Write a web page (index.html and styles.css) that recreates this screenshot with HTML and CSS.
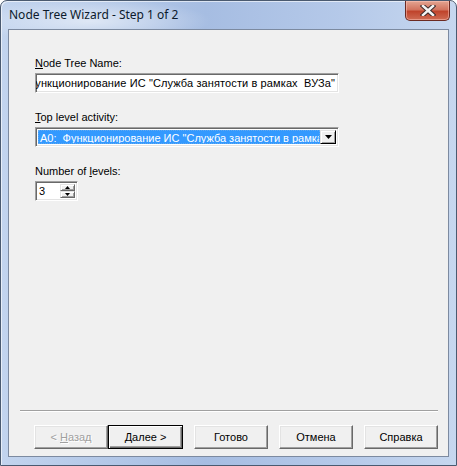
FILE: index.html
```html
<!DOCTYPE html>
<html lang="ru">

<head>
    <meta charset="UTF-8">
    <title>Node Tree Wizard</title>
    <link rel="stylesheet" href="styles.css">
</head>

<body>
    <div class="window">
        <div class="titlebar">
            <span class="title">Node Tree Wizard - Step 1 of 2</span>
            <div class="close">
                <svg width="16" height="11" viewBox="0 0 16 11">
                    <path d="M3 1 L13 10 M13 1 L3 10" stroke="#3a2a2a" stroke-width="4.5" stroke-linecap="square"/>
                    <path d="M3 1 L13 10 M13 1 L3 10" stroke="#f4f4f4" stroke-width="2.5" stroke-linecap="square"/>
                </svg>
            </div>
        </div>
        <div class="client">
            <div class="form">
                <div class="label"><u>N</u>ode Tree Name:</div>
                <div class="edit name-edit">
                    <span class="edit-text">Функционирование ИС "Служба занятости в рамках&nbsp; ВУЗа"</span>
                </div>

                <div class="label gap"><u>T</u>op level activity:</div>
                <div class="combo">
                    <div class="combo-value">A0:&nbsp; Функционирование ИС "Служба занятости в рамках&nbsp; ВУЗа"</div>
                    <div class="combo-btn">
                        <svg width="7" height="4" viewBox="0 0 7 4"><path d="M0 0 H7 L3.5 4 Z" fill="#000"/></svg>
                    </div>
                </div>

                <div class="label gap">Number of <u>l</u>evels:</div>
                <div class="spin">
                    <div class="spin-value">3</div>
                    <div class="spin-btns">
                        <div class="spin-btn">
                            <svg width="5" height="3" viewBox="0 0 5 3"><path d="M2.5 0 L5 3 H0 Z" fill="#000"/></svg>
                        </div>
                        <div class="spin-btn">
                            <svg width="5" height="3" viewBox="0 0 5 3"><path d="M0 0 H5 L2.5 3 Z" fill="#000"/></svg>
                        </div>
                    </div>
                </div>
            </div>

            <div class="footer">
                <div class="separator"></div>
                <div class="buttons">
                    <div class="pair">
                        <button class="btn disabled">&lt; <u>Н</u>азад</button>
                        <button class="btn default"><u>Д</u>алее &gt;</button>
                    </div>
                    <button class="btn">Готово</button>
                    <button class="btn">Отмена</button>
                    <button class="btn">Справка</button>
                </div>
            </div>
        </div>
    </div>
</body>

</html>
```

FILE: styles.css
```css
* {
    margin: 0;
    padding: 0;
    box-sizing: border-box;
}

body {
    width: 457px;
    height: 466px;
    background: #ffffff;
    font-family: "Liberation Sans", Arial, sans-serif;
    font-size: 11px;
    color: #000;
}

.window {
    width: 457px;
    height: 466px;
    display: flex;
    flex-direction: column;
    padding: 0 7px 8px 7px;
    border: 1px solid #4a5a70;
    border-radius: 7px 7px 0 0;
    background:
        radial-gradient(ellipse 120px 22px at 90px 20px, rgba(255, 255, 255, 0.55), rgba(255, 255, 255, 0)),
        linear-gradient(to right, #c2d4ee, #a6bde2 45%, #b5c9e9 75%, #c6d7ef);
    box-shadow: inset 1px 1px 0 rgba(255, 255, 255, 0.6);
}

.titlebar {
    height: 28px;
    display: flex;
    align-items: flex-start;
    justify-content: space-between;
}

.title {
    font-family: "Noto Sans", "Liberation Sans", sans-serif;
    font-size: 12px;
    line-height: 16px;
    margin: 6px 0 0 1px;
    color: #0c1a2c;
}

.close {
    width: 45px;
    height: 20px;
    margin-right: -1px;
    display: flex;
    align-items: center;
    justify-content: center;
    border: 1px solid #6b2a22;
    border-top: none;
    border-radius: 0 0 5px 5px;
    background: linear-gradient(to bottom, #e3a592 0%, #d2745f 45%, #c0442c 55%, #cf6c54 100%);
    box-shadow: inset 0 0 0 1px rgba(255, 200, 190, 0.5);
}

.client {
    flex: 1;
    display: flex;
    flex-direction: column;
    background: #f0f0f0;
    border: 1px solid #7c8aa0;
}

.form {
    flex: 1;
    padding: 26px 0 0 26px;
}

.label {
    line-height: 14px;
    margin-bottom: 3px;
}

.label.gap {
    margin-top: 17px;
}

.label.gap:last-of-type {
    margin-top: 16px;
}

/* sunken 3d edge */
.edit,
.combo,
.spin {
    background: #fff;
    border: 1px solid;
    border-color: #a0a0a0 #fff #fff #a0a0a0;
    box-shadow: inset 1px 1px 0 #696969, inset -1px -1px 0 #e3e3e3;
}

.name-edit {
    width: 304px;
    height: 20px;
    display: flex;
    justify-content: flex-end;
    align-items: center;
    overflow: hidden;
    white-space: nowrap;
    padding: 0 3px 0 2px;
}

.edit-text {
    line-height: 14px;
    letter-spacing: 0.11px;
}

.combo {
    width: 304px;
    height: 20px;
    display: flex;
    padding: 2px;
}

.combo-value {
    flex: 1;
    overflow: hidden;
    white-space: nowrap;
    background: #3399ff;
    color: #fff;
    line-height: 14px;
    padding-left: 1px;
    border: 1px dotted #5fa8f0;
}

.combo-btn {
    width: 16px;
    display: flex;
    align-items: center;
    justify-content: center;
    background: #f0f0f0;
    border: 1px solid;
    border-color: #e3e3e3 #000 #000 #e3e3e3;
    box-shadow: inset 1px 1px 0 #fff, inset -1px -1px 0 #a0a0a0;
}

.spin {
    width: 43px;
    height: 20px;
    display: flex;
    padding: 2px;
}

.spin-value {
    flex: 1;
    line-height: 14px;
    padding-left: 1px;
}

.spin-btns {
    width: 15px;
    display: flex;
    flex-direction: column;
}

.spin-btn {
    flex: 1;
    display: flex;
    align-items: center;
    justify-content: center;
    background: #f0f0f0;
    border: 1px solid;
    border-color: #e3e3e3 #696969 #696969 #e3e3e3;
    box-shadow: inset 1px 1px 0 #fff, inset -1px -1px 0 #a0a0a0;
}

.footer {
    padding: 0 10px 7px 11px;
}

.separator {
    height: 2px;
    border-top: 1px solid #a0a0a0;
    border-bottom: 1px solid #fff;
}

.buttons {
    display: flex;
    gap: 11px;
    margin-top: 13px;
    padding-left: 14px;
}

.pair {
    display: flex;
}

.btn {
    width: 75px;
    height: 24px;
    font-family: "Liberation Sans", Arial, sans-serif;
    font-size: 11px;
    color: #000;
    background: #f0f0f0;
    border: 1px solid;
    border-color: #fff #696969 #696969 #fff;
    box-shadow: inset -1px -1px 0 #a0a0a0, inset 1px 1px 0 #e3e3e3;
}

.btn.disabled {
    width: 74px;
    color: #a0a0a0;
    text-shadow: 1px 1px 0 #fff;
}

.btn.default {
    border: 1px solid #000;
    box-shadow: inset 1px 1px 0 #fff, inset -1px -1px 0 #696969, inset -2px -2px 0 #a0a0a0;
}
```
